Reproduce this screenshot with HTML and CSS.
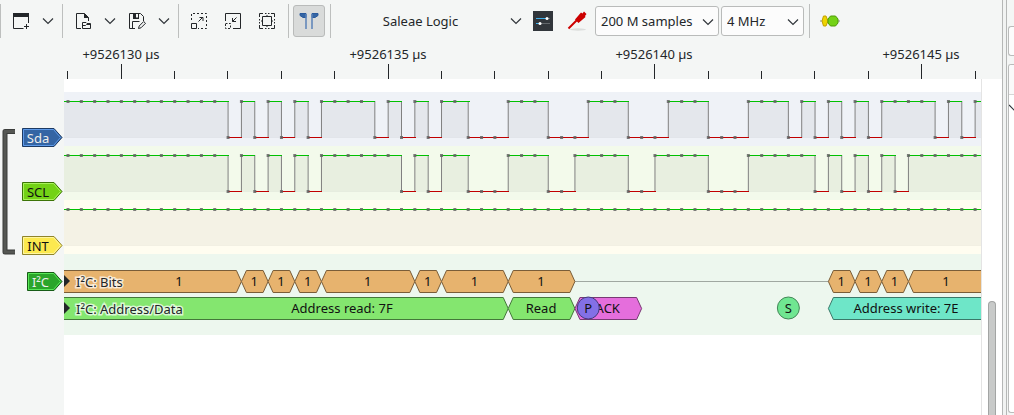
FILE: index.html
```html
<!DOCTYPE html>
<html lang="en">
<head>
<meta charset="utf-8">
<title>Logic analyzer session</title>
<link rel="stylesheet" href="styles.css">
</head>
<body>
<main class="session">
  <div class="toolbar" role="toolbar" aria-label="Session">
    <div class="group group-new">
      <button class="tool" aria-label="New view"><svg width="18" height="18" viewBox="0 0 18 18"><path d="M1 1h16v4H1z" fill="#232629"/><path d="M1.500 4v12.500h10M16.500 4v7M12 14.500h5M14.500 12v5" fill="none" stroke="#232629"/></svg></button>
      <button class="drop" aria-label="New view options"><svg width="12" height="8" viewBox="0 0 12 8"><path class="chev" d="M1 1.500l5 5 5-5"/></svg></button>
    </div>
    <div class="group group-file">
      <button class="tool" aria-label="Open"><svg width="18" height="18" viewBox="0 0 18 18"><path d="M7 16.500H2.500v-15h8l4 4V9" fill="none" stroke="#232629"/><path d="M10 1l5 5h-5z" fill="#232629"/><path d="M8.500 16.500v-6h3.500l1 1h3.500v5zM8.500 13.500h3l1-1h4" fill="none" stroke="#232629"/></svg></button>
      <button class="drop" aria-label="Open options"><svg width="12" height="8" viewBox="0 0 12 8"><path class="chev" d="M1 1.500l5 5 5-5"/></svg></button>
      <button class="tool" aria-label="Save"><svg width="18" height="18" viewBox="0 0 18 18"><path d="M7 16.500H1.500v-15h11l3 3V9M4.500 16v-6.500h7" fill="none" stroke="#232629"/><path d="M5 1h6v6H5z" fill="#232629"/><path d="M8 2h2v3.500H8z" fill="#f4f6f5"/><path d="M10.500 16.500l.7-2.500 4.500-4.500 1.800 1.800-4.500 4.500z" fill="none" stroke="#232629"/></svg></button>
      <button class="drop" aria-label="Save options"><svg width="12" height="8" viewBox="0 0 12 8"><path class="chev" d="M1 1.500l5 5 5-5"/></svg></button>
    </div>
    <div class="group group-zoom">
      <button class="tool" aria-label="Zoom in"><svg width="18" height="18" viewBox="0 0 18 18"><path d="M1.500 8V1.500h15v15H8" fill="none" stroke="#232629" stroke-dasharray="2 2"/><path d="M1.500 11.500h5v5h-5zM8.500 9.500l4.500-4.500M9.500 5.500h3.500v3.500" fill="none" stroke="#232629"/></svg></button>
      <button class="tool" aria-label="Zoom out"><svg width="18" height="18" viewBox="0 0 18 18"><path d="M1.500 9V1.500h15v15H9M12.500 5.500l-4 4M8.500 6v3.500H12" fill="none" stroke="#232629"/><path d="M1.500 11.500h5v5h-5z" fill="none" stroke="#232629" stroke-dasharray="2 1.500"/></svg></button>
      <button class="tool" aria-label="Zoom to fit"><svg width="18" height="18" viewBox="0 0 18 18"><path d="M1.500 5V1.500H5M13 1.500h3.500V5M16.500 13v3.500H13M5 16.500H1.500V13M7 1.500h1.500M10 1.500h1.500M7 16.500h1.500M10 16.500h1.500M1.500 7v1.500M1.500 10v1.500M16.500 7v1.500M16.500 10v1.500M4.500 4.500h9v9h-9z" fill="none" stroke="#232629"/><path d="M7.500 4.500L9 3l1.500 1.500zM7.500 13.500L9 15l1.500-1.500zM4.500 7.500L3 9l1.500 1.500zM13.500 7.500L15 9l-1.500 1.500z" fill="#232629"/></svg></button>
    </div>
    <div class="group group-cursor">
      <button class="tool pressed" aria-label="Show cursors" aria-pressed="true"><svg width="22" height="18" viewBox="0 0 22 18"><path d="M2 1.500h6v4H5L2 3.500zM20 1.500h-6v4h3l3-2z" fill="#3465a4" stroke="#2a5a9c"/><path d="M8 2v15M14 2v15" fill="none" stroke="#5b82b8" stroke-width="1.500"/></svg></button>
    </div>
    <div class="group group-device">
      <button class="device"><span class="device-name">Saleae Logic</span><svg width="12" height="8" viewBox="0 0 12 8"><path class="chev" d="M1 1.500l5 5 5-5"/></svg></button>
      <button class="tool tight" aria-label="Configure device"><svg width="20" height="20" viewBox="0 0 20 20"><path d="M0 0h20v20H0z" fill="#31363b"/><path d="M3 7.500h14M3 12.500h14" stroke="#62676b"/><path d="M3 7.500h11M3 12.500h4" stroke="#3daee9"/><circle cx="14" cy="7.500" r="1.500" fill="#fff"/><circle cx="7" cy="12.500" r="1.500" fill="#fff"/></svg></button>
      <button class="tool probe" aria-label="Channels"><svg width="20" height="20" viewBox="0 0 20 20"><ellipse cx="11" cy="18.500" rx="8" ry="1.200" fill="#dcdedd"/><path d="M1.500 17.500l9-9" stroke="#c00" stroke-width="2"/><path d="M8 8.500l6-7 1.500 1L17 .5l2.500 2.500L18 5l.5 1-7 6z" fill="#c00"/></svg></button>
      <span class="combo samples"><select aria-label="Sample count"><option>200 M samples</option></select><svg width="12" height="8" viewBox="0 0 12 8"><path class="chev" d="M1 1.500l5 5 5-5"/></svg></span>
      <span class="combo rate"><select aria-label="Sample rate"><option>4 MHz</option></select><svg width="12" height="8" viewBox="0 0 12 8"><path class="chev" d="M1 1.500l5 5 5-5"/></svg></span>
    </div>
    <div class="group group-decoder">
      <button class="tool" aria-label="Add protocol decoder"><svg width="20" height="12" viewBox="0 0 20 12"><path d="M0 6h20" stroke="#888a85"/><path d="M3.500 1h2.500l2 5-2 5H3.500L2 6z" fill="#edd400" stroke="#c4a000"/><path d="M10.500 1h5l2.500 3v4l-2.500 3h-5L8 8V4z" fill="#73d216" stroke="#4e9a06"/></svg></button>
    </div>
  </div>
  <svg class="ruler" id="ruler" role="img" aria-label="Time ruler"></svg>
  <div class="view">
    <div class="labels">
      <svg class="bracket" width="14" height="128" viewBox="0 0 14 128"><path d="M13 3.500H3v120.500h10" fill="none" stroke="#3b3d3b" stroke-width="5" stroke-linejoin="round"/><path d="M13 3.500H3v120.500h10" fill="none" stroke="#555753" stroke-width="3"/></svg>
      <div class="tags" id="tags"></div>
    </div>
    <div class="plot">
      <svg class="trace sda" id="sda" role="img" aria-label="Sda"></svg>
      <svg class="trace scl" id="scl" role="img" aria-label="SCL"></svg>
      <svg class="trace int" id="int" role="img" aria-label="INT"></svg>
      <svg class="decoder" id="decoder" role="img" aria-label="I²C decoder"></svg>
    </div>
    <div class="scroll"><div class="thumb"></div></div>
  </div>
</main>
<aside class="dock">
  <div class="field"></div>
  <div class="panel">
    <div class="panel-head"></div>
    <svg width="12" height="8" viewBox="0 0 12 8"><path class="chev" d="M0 1l6 6 6-6"/></svg>
  </div>
</aside>
<script src="main.js"></script>
</body>
</html>
```

FILE: styles.css
```css
* { box-sizing: border-box; }
body {
  margin: 0;
  min-height: 100vh;
  display: flex;
  background: #f4f6f5;
  color: #232629;
  font: 13px/18px "Noto Sans", sans-serif;
  overflow: hidden;
}
svg { display: block; flex: none; }
button, select { font: inherit; color: inherit; }
button { border: 0; padding: 0; background: none; }
.chev { fill: none; stroke: #31363b; stroke-width: 1.2; }

.session { flex: 1; min-width: 0; display: flex; flex-direction: column; }
.toolbar { display: flex; align-items: center; height: 42px; }
.group {
  display: flex;
  align-items: center;
  height: 34px;
  border-left: 1px solid #bdbfbe;
}
.tool { display: grid; place-items: center; width: 34px; height: 32px; }
.tool.tight { width: 32px; }
.tool.probe { width: 36px; }
.drop { display: grid; place-items: center; width: 20px; height: 32px; }
.group-new { width: 62px; padding-left: 3px; }
.group-file { width: 116px; padding-left: 3px; }
.group-zoom { width: 110px; padding-left: 3px; }
.group-cursor { width: 42px; padding-left: 4px; }
.tool.pressed {
  width: 32px;
  border: 1px solid #b9bbba;
  border-radius: 3px;
  background: #d9dbda;
}
.group-device { width: 479px; }
.device { display: flex; align-items: center; width: 196px; padding-right: 5px; height: 32px; }
.device-name { flex: 1; text-align: center; }
.combo { position: relative; margin-right: 2px; }
.combo select {
  appearance: none;
  width: 100%;
  height: 30px;
  padding: 0 5px;
  border: 1px solid #b9bbba;
  border-radius: 3px;
  background: #fcfcfc;
}
.combo svg { position: absolute; right: 5px; top: 12px; pointer-events: none; }
.samples { width: 124px; }
.rate { width: 83px; }
.group-decoder { padding-left: 3px; }

.ruler { width: 100%; height: 37px; }
.ruler text, .decoder text { text-anchor: middle; fill: #232629; }
.decoder .note { fill: #111; }

.view { flex: 1; display: flex; }
.labels { display: flex; justify-content: space-between; width: 64px; padding: 49px 1px 0 2px; }
.tags { display: flex; flex-direction: column; align-items: flex-end; gap: 35px; }
.tags .decoder-tag { margin-top: -18px; }
.plot { flex: 1; min-width: 0; padding-top: 13px; background: #fff; border-right: 1px solid #e4e4e4; }
.trace { width: 100%; height: 54px; }
.sda { background: #eff2f7; }
.scl { background: #f3faeb; }
.int { background: #fffdf0; }
.decoder { width: 100%; height: 81px; background: #edf7ee; }
.decoder .caption { text-anchor: start; paint-order: stroke; stroke: #fff; stroke-opacity: .7; stroke-width: 3px; }
.scroll { width: 20px; padding: 222px 6px 0; background: #fff; display: flex; }
.thumb { flex: 1; border: 1px solid #a3a5a4; border-bottom: 0; border-radius: 4px 4px 0 0; background: #c8cac9; }

.dock {
  width: 12px;
  padding: 26px 0 2px 5px;
  border-left: 1px solid #b5b7b6;
  box-shadow: inset 3px 0 #f1f3f2, inset 4px 0 #b5b7b6;
  display: flex;
  flex-direction: column;
  gap: 8px;
}
.field { height: 30px; border: 1px solid #b9bbba; border-right: 0; border-radius: 3px 0 0 3px; background: #fcfcfc; }
.panel { flex: 1; overflow: hidden; border: 1px solid #b9bbba; border-right: 0; border-radius: 3px 0 0 3px; background: #fff; }
.panel-head { height: 30px; margin-bottom: 9px; border-bottom: 1px solid #d5d7d6; background: #fafafa; }
```

FILE: main.js
```js
const NS = "http://www.w3.org/2000/svg";
const WIDTH = 2000;
const STEP = 13.34;
const FIRST = 4;
const at = k => FIRST + k * STEP;

function add(parent, name, attrs, text) {
  const el = document.createElementNS(NS, name);
  for (const key in attrs) el.setAttribute(key, attrs[key]);
  if (text) el.textContent = text;
  parent.appendChild(el);
  return el;
}

/* Time ruler: a tick every microsecond, a label every five. */
const ruler = document.getElementById("ruler");
for (let i = 0; i < 18; i++) {
  const x = Math.round(67.4 + i * STEP * 4);
  const major = i % 5 === 1;
  add(ruler, "rect", { x, y: major ? 22 : 29, width: 1, height: major ? 15 : 8, fill: "#232629" });
  if (major) add(ruler, "text", { x, y: 17 }, `+${9526129 + i} µs`);
}

/* Channel tags. */
const tags = [
  ["Sda", 41, "#3465a4", "#5e9bea", "#1c3a63", "#eeeeec"],
  ["SCL", 41, "#73d216", "#a8f25b", "#3c7407", "#111"],
  ["INT", 41, "#fce94f", "#fff6a0", "#8f842b", "#111"],
  ["I²C", 36, "#2ba52b", "#58e858", "#175c17", "#eeeeec"]
];
tags.forEach(([name, w, fill, inner, edge, ink], i) => {
  const svg = add(document.getElementById("tags"), "svg", { width: w, height: 19, class: i === 3 ? "decoder-tag" : "tag" });
  add(svg, "path", { d: `M.5.5H${w - 9}L${w - 1} 9.500 ${w - 9} 18.500H.5z`, fill, stroke: edge });
  add(svg, "path", { d: `M1.500 1.500H${w - 9.5}L${w - 2.5} 9.500 ${w - 9.5} 17.500H1.500z`, fill: "none", stroke: inner });
  add(svg, "text", { x: (w - 9) / 2, y: 15, "text-anchor": "middle", fill: ink }, name);
});

/* Logic traces: sample indices at which the level toggles, starting high. */
const traces = {
  sda: [12,13,14,15,16,17,18,19,23,24,25,26,27,28,30,33,36,39,42,45,48,51,54,55,56,57,58,59,60,61,65,66,67,68],
  scl: [12,13,14,15,16,17,18,19,25,26,27,28,30,33,36,38,42,44,48,51,56,57,58,59,60,61,62,63],
  int: []
};
for (const id in traces) {
  const svg = document.getElementById(id);
  add(svg, "rect", { x: 0, y: 45, width: WIDTH, height: 1, fill: "#000", "fill-opacity": .05 });
  const edges = [...traces[id], 140];
  let x = 0, high = true;
  for (const k of edges) {
    const end = at(k);
    if (high) add(svg, "rect", { x, y: 10, width: end - x, height: 35, fill: "#000", "fill-opacity": .045 });
    x = end; high = !high;
  }
  x = 0; high = true;
  for (const k of edges) {
    const end = at(k);
    add(svg, "rect", { x: end - .5, y: 9, width: 1, height: 37, fill: "#808080" });
    add(svg, "rect", { x: Math.round(x), y: high ? 9 : 45, width: Math.round(end - x) + 1, height: 1, fill: high ? "#00c000" : "#c00000" });
    x = end; high = !high;
  }
  for (let k = 0; k < 140; k++) {
    const low = edges.filter(e => e <= k).length % 2;
    add(svg, "rect", { x: at(k) - 1.5, y: low ? 44 : 8, width: 3, height: 3, fill: "#646464", "fill-opacity": .85 });
  }
}

/* Decoder annotations. */
const dec = document.getElementById("decoder");
add(dec, "rect", { x: 510, y: 27, width: 256, height: 1, fill: "#a0a8a1" });
function box(from, to, y, fill, stroke, label, tx) {
  const a = from < 0 ? -20 : at(from), b = at(to), m = y + 11;
  add(dec, "path", { d: `M${a} ${m}L${a + 5} ${y}H${b - 5}L${b} ${m} ${b - 5} ${y + 22}H${a + 5}z`, fill, stroke });
  add(dec, "text", { class: "note", x: tx || (a + b) / 2 - .5, y: y + 15.5 }, label);
}
const bit = (a, b, tx) => box(a, b, 16.5, "#e7b36e", "#7a5d38", "1", tx);
bit(-1, 13, 115);
[[13,15],[15,17],[17,19],[19,26],[26,28],[28,33],[33,38],[57,59],[59,61],[61,63]].forEach(p => bit(...p));
bit(63, 140, 882);
box(-1, 33, 43.5, "#84e66f", "#44783a", "Address read: 7F", 278);
box(33, 38, 43.5, "#84e66f", "#44783a", "Read");
box(38, 43, 43.5, "#e56edc", "#793a74", "ACK");
box(57, 140, 43.5, "#6ee6c8", "#3a7869", "Address write: 7E", 842);
function dot(k, fill, stroke, label) {
  add(dec, "circle", { cx: at(k), cy: 54, r: 11, fill, stroke });
  add(dec, "text", { class: "note", x: at(k), y: 59 }, label);
}
dot(39, "#8370e6", "#453b7a", "P");
dot(54, "#70e691", "#438657", "S");
["I²C: Bits", "I²C: Address/Data"].forEach((name, i) => {
  add(dec, "path", { d: `M0 ${21 + i * 27}l6 6-6 6z`, fill: "#232629" });
  add(dec, "text", { class: "caption", x: 12, y: 33 + i * 27 }, name);
});
```
